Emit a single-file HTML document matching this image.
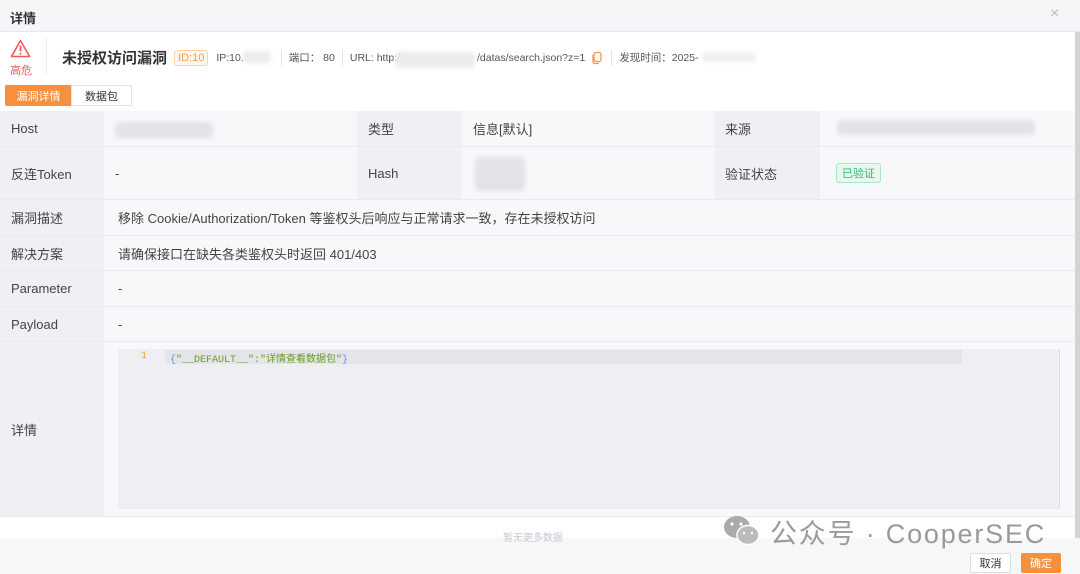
<!DOCTYPE html><html><head><meta charset="utf-8"><style>
*{box-sizing:border-box;margin:0;padding:0}
body{width:1080px;height:574px;overflow:hidden;background:#fff;font-family:"Liberation Sans","Noto Sans CJK SC",sans-serif;color:#333;position:relative;font-size:12px}
.a{position:absolute}
.hdr{left:0;top:0;width:1080px;height:32px;background:#f5f6f8;border-bottom:1px solid #e6e8ec}
.lab{background:#eef0f3;color:#444;font-size:13px}
.val{background:#f7f8fa;color:#444;font-size:13px}
.row{position:absolute;left:0;width:1075px;border-bottom:1px solid #e8eaee}
.cell{position:absolute;top:0;bottom:0;display:flex;align-items:center;padding-left:11px}
.blur{position:absolute;background:#e2e3e6;border-radius:4px;filter:blur(2px)}
.sep{display:inline-block;width:1px;height:16px;background:#e3e3e3;vertical-align:middle;margin:0 7px}
</style></head><body>
<div class="a hdr"><span class="a" style="left:10px;top:8px;font-size:13px;font-weight:bold;color:#333">详情</span><span class="a" style="left:1050px;top:5px;font-size:16px;color:#bbb">×</span></div>
<svg class="a" style="left:10px;top:39px" width="21" height="19" viewBox="0 0 21 19"><path d="M10.5 1.5L19.5 17.5H1.5Z" fill="none" stroke="#f05a5a" stroke-width="1.6" stroke-linejoin="round"/><path d="M10.5 6.5v6" stroke="#f05a5a" stroke-width="1.8"/><circle cx="10.5" cy="14.8" r="1" fill="#f05a5a"/></svg>
<span class="a" style="left:10px;top:62px;font-size:11px;color:#f05a5a">高危</span>
<div class="a" style="left:46px;top:38px;width:1px;height:36px;background:#eee"></div>
<div class="a" style="left:62px;top:47px;display:flex;align-items:center;white-space:nowrap;font-size:10.5px;color:#555">
<span style="font-size:15px;font-weight:bold;color:#333">未授权访问漏洞</span>
<span style="margin-left:7px;border:1px solid #fbd3a8;background:#fff6ec;color:#f5a04a;padding:1px 3px;border-radius:3px;font-size:11px">ID:10</span>
<span style="margin-left:8px">IP:10.</span><span style="display:inline-block;width:30px"></span><span class="sep"></span>
<span>端口：&nbsp;80</span><span class="sep"></span>
<span>URL: http://</span><span style="display:inline-block;width:74px"></span><span>/datas/search.json?z=1</span>
<svg width="14" height="14" viewBox="0 0 14 14" style="margin-left:5px"><rect x="4" y="1.5" width="7" height="9" rx="2" fill="none" stroke="#f5934a" stroke-width="1.3"/><path d="M3 4v6.5a2 2 0 0 0 2 2h4" fill="none" stroke="#f5934a" stroke-width="1.3"/></svg><span class="sep"></span>
<span>发现时间：2025-</span></div>
<div class="blur" style="left:243px;top:51px;width:28px;height:12px;background:#ececec"></div>
<div class="blur" style="left:395px;top:52px;width:80px;height:16px;background:#ececec"></div>
<div class="blur" style="left:702px;top:52px;width:54px;height:10px;background:#f0f0f0"></div>
<div class="a" style="left:5px;top:85px;width:67px;height:21px;background:#f5913e;color:#fff;font-size:11px;display:flex;align-items:center;justify-content:center;border-radius:2px 0 0 2px">漏洞详情</div>
<div class="a" style="left:71px;top:85px;width:61px;height:21px;background:#fff;border:1px solid #e3e3e3;color:#333;font-size:11px;display:flex;align-items:center;justify-content:center">数据包</div>

<div class="row" style="top:111px;height:36px"><div class="cell lab" style="left:0;width:104px">Host</div><div class="cell val" style="left:104px;width:253px"></div><div class="cell lab" style="left:357px;width:105px">类型</div><div class="cell val" style="left:462px;width:252px">信息[默认]</div><div class="cell lab" style="left:714px;width:106px">来源</div><div class="cell val" style="left:820px;width:255px"></div></div>
<div class="blur" style="left:115px;top:122px;width:98px;height:16px"></div>
<div class="blur" style="left:837px;top:120px;width:198px;height:15px"></div>
<div class="row" style="top:147px;height:53px"><div class="cell lab" style="left:0;width:104px">反连Token</div><div class="cell val" style="left:104px;width:253px">-</div><div class="cell lab" style="left:357px;width:105px">Hash</div><div class="cell val" style="left:462px;width:252px"></div><div class="cell lab" style="left:714px;width:106px">验证状态</div><div class="cell val" style="left:820px;width:255px"><span style="margin-left:5px;border:1px solid #a8e6c8;background:#e8f8ef;color:#2dba74;font-size:11px;padding:1px 5px;border-radius:3px">已验证</span></div></div>
<div class="blur" style="left:475px;top:157px;width:50px;height:34px"></div>
<div class="row" style="top:200px;height:36px"><div class="cell lab" style="left:0;width:104px">漏洞描述</div><div class="cell val" style="left:104px;width:971px;padding-left:14px">移除 Cookie/Authorization/Token 等鉴权头后响应与正常请求一致，存在未授权访问</div></div>
<div class="row" style="top:236px;height:35px"><div class="cell lab" style="left:0;width:104px">解决方案</div><div class="cell val" style="left:104px;width:971px;padding-left:14px">请确保接口在缺失各类鉴权头时返回 401/403</div></div>
<div class="row" style="top:271px;height:36px"><div class="cell lab" style="left:0;width:104px">Parameter</div><div class="cell val" style="left:104px;width:971px;padding-left:14px">-</div></div>
<div class="row" style="top:307px;height:35px"><div class="cell lab" style="left:0;width:104px">Payload</div><div class="cell val" style="left:104px;width:971px;padding-left:14px">-</div></div>
<div class="row" style="top:342px;height:175px"><div class="cell lab" style="left:0;width:104px">详情</div><div class="cell val" style="left:104px;width:971px"></div></div>
<div class="a" style="left:118px;top:349px;width:942px;height:160px;background:#eeeff3;border-right:1px solid #ddd"></div>
<div class="a" style="left:165px;top:350px;width:797px;height:14px;background:#e4e5ea"></div>
<span class="a" style="left:141px;top:351px;font-family:'Liberation Mono',monospace;font-size:10px;color:#f0a040">1</span>
<span class="a" style="left:170px;top:350px;font-family:'Liberation Mono','Noto Sans CJK SC',monospace;font-size:10px;color:#6a9a1e"><span style="color:#6b8fd6">{</span>"__DEFAULT__":"详情查看数据包"<span style="color:#6b8fd6">}</span></span>
<div class="a" style="left:1075px;top:32px;width:5px;height:510px;background:#d4d4d4"></div>
<div class="a" style="left:0;top:538px;width:1080px;height:36px;background:#f6f7f9"></div>
<span class="a" style="left:503px;top:529px;font-size:10px;color:#c4c8d0">暂无更多数据</span>
<svg class="a" style="left:722px;top:513px" width="40" height="36" viewBox="0 0 40 36"><ellipse cx="15" cy="14" rx="13" ry="11" fill="#aaa"/><ellipse cx="26" cy="22" rx="11" ry="9.5" fill="#bbb" stroke="#fff" stroke-width="1.5"/><circle cx="10" cy="11" r="1.6" fill="#fff"/><circle cx="19" cy="11" r="1.6" fill="#fff"/><circle cx="22" cy="20" r="1.3" fill="#fff"/><circle cx="30" cy="20" r="1.3" fill="#fff"/></svg>
<span class="a" style="left:770px;top:512px;font-size:27px;color:#9a9a9a;letter-spacing:1.8px;white-space:nowrap">公众号 · CooperSEC</span>
<div class="a" style="left:970px;top:553px;width:41px;height:20px;background:#fff;border:1px solid #ddd;border-radius:2px;font-size:11px;display:flex;align-items:center;justify-content:center;color:#333">取消</div>
<div class="a" style="left:1021px;top:553px;width:40px;height:20px;background:#f5913e;border-radius:2px;font-size:11px;display:flex;align-items:center;justify-content:center;color:#fff">确定</div>
</body></html>
